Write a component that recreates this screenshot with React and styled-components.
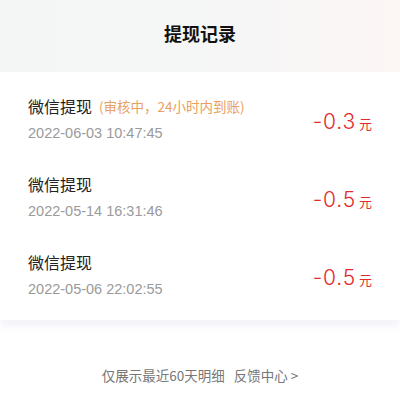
import React from "react";
import styled, { createGlobalStyle } from "styled-components";

const GlobalStyle = createGlobalStyle`
  html, body {
    margin: 0;
    padding: 0;
    background: #fff;
    font-family: "Noto Sans CJK SC", "Noto Sans", sans-serif;
  }
  * { box-sizing: border-box; }
`;

const records = [
  { title: "微信提现", note: "(审核中，24小时内到账)", time: "2022-06-03 10:47:45", amount: "-0.3" },
  { title: "微信提现", time: "2022-05-14 16:31:46", amount: "-0.5" },
  { title: "微信提现", time: "2022-05-06 22:02:55", amount: "-0.5" },
];

export default function App() {
  return (
    <Page>
      <GlobalStyle />
      <Header>
        <Title>提现记录</Title>
      </Header>
      <Card>
        {records.map((r, i) => (
          <Row key={i}>
            <Info>
              <Name>
                {r.title}
                {r.note && <Note>{r.note}</Note>}
              </Name>
              <Time>{r.time}</Time>
            </Info>
            <Amount>
              {r.amount}
              <Unit>元</Unit>
            </Amount>
          </Row>
        ))}
      </Card>
      <Footer>
        仅展示最近60天明细<FooterLink>反馈中心 &gt;</FooterLink>
      </Footer>
    </Page>
  );
}

const Page = styled.div`
  width: 400px;
  height: 401px;
  display: flex;
  flex-direction: column;
  background: #fff;
  overflow: hidden;
`;

const Header = styled.div`
  height: 72px;
  display: flex;
  align-items: center;
  justify-content: center;
  background: linear-gradient(90deg, #f4f6f6 0%, #f6f6f6 60%, #fcf6f5 100%);
`;

const Title = styled.h1`
  margin: 0;
  font-size: 18px;
  font-weight: 700;
  color: #111;
  padding-bottom: 6px;
`;

const Card = styled.div`
  background: #fff;
  padding: 8px 0 6px;
  box-shadow: 0 6px 8px rgba(225, 225, 240, 0.4);
`;

const Row = styled.div`
  height: 78px;
  padding: 0 28px;
  display: flex;
  align-items: center;
  justify-content: space-between;
`;

const Info = styled.div`
  display: flex;
  flex-direction: column;
  gap: 6px;
`;

const Name = styled.div`
  font-size: 16px;
  color: #222;
  line-height: 22px;
  display: flex;
  align-items: center;
`;

const Note = styled.span`
  font-size: 13.5px;
  color: #e9a060;
  margin-left: 7px;
`;

const Time = styled.div`
  font-family: "Liberation Sans", Arial, sans-serif;
  font-size: 14.5px;
  color: #9a9a9a;
  line-height: 20px;
`;

const Amount = styled.div`
  font-family: "Inter", sans-serif;
  font-weight: 300;
  font-size: 21px;
  letter-spacing: 0.8px;
  color: #e32b2b;
  display: flex;
  align-items: baseline;
  margin-top: 5px;
`;

const Unit = styled.span`
  font-family: "Noto Sans CJK SC", sans-serif;
  font-size: 13px;
  font-weight: 400;
  letter-spacing: 0;
  margin-left: 3px;
`;

const Footer = styled.div`
  margin-top: 45px;
  text-align: center;
  font-size: 13.5px;
  color: #777;
`;

const FooterLink = styled.span`
  margin-left: 9px;
`;
